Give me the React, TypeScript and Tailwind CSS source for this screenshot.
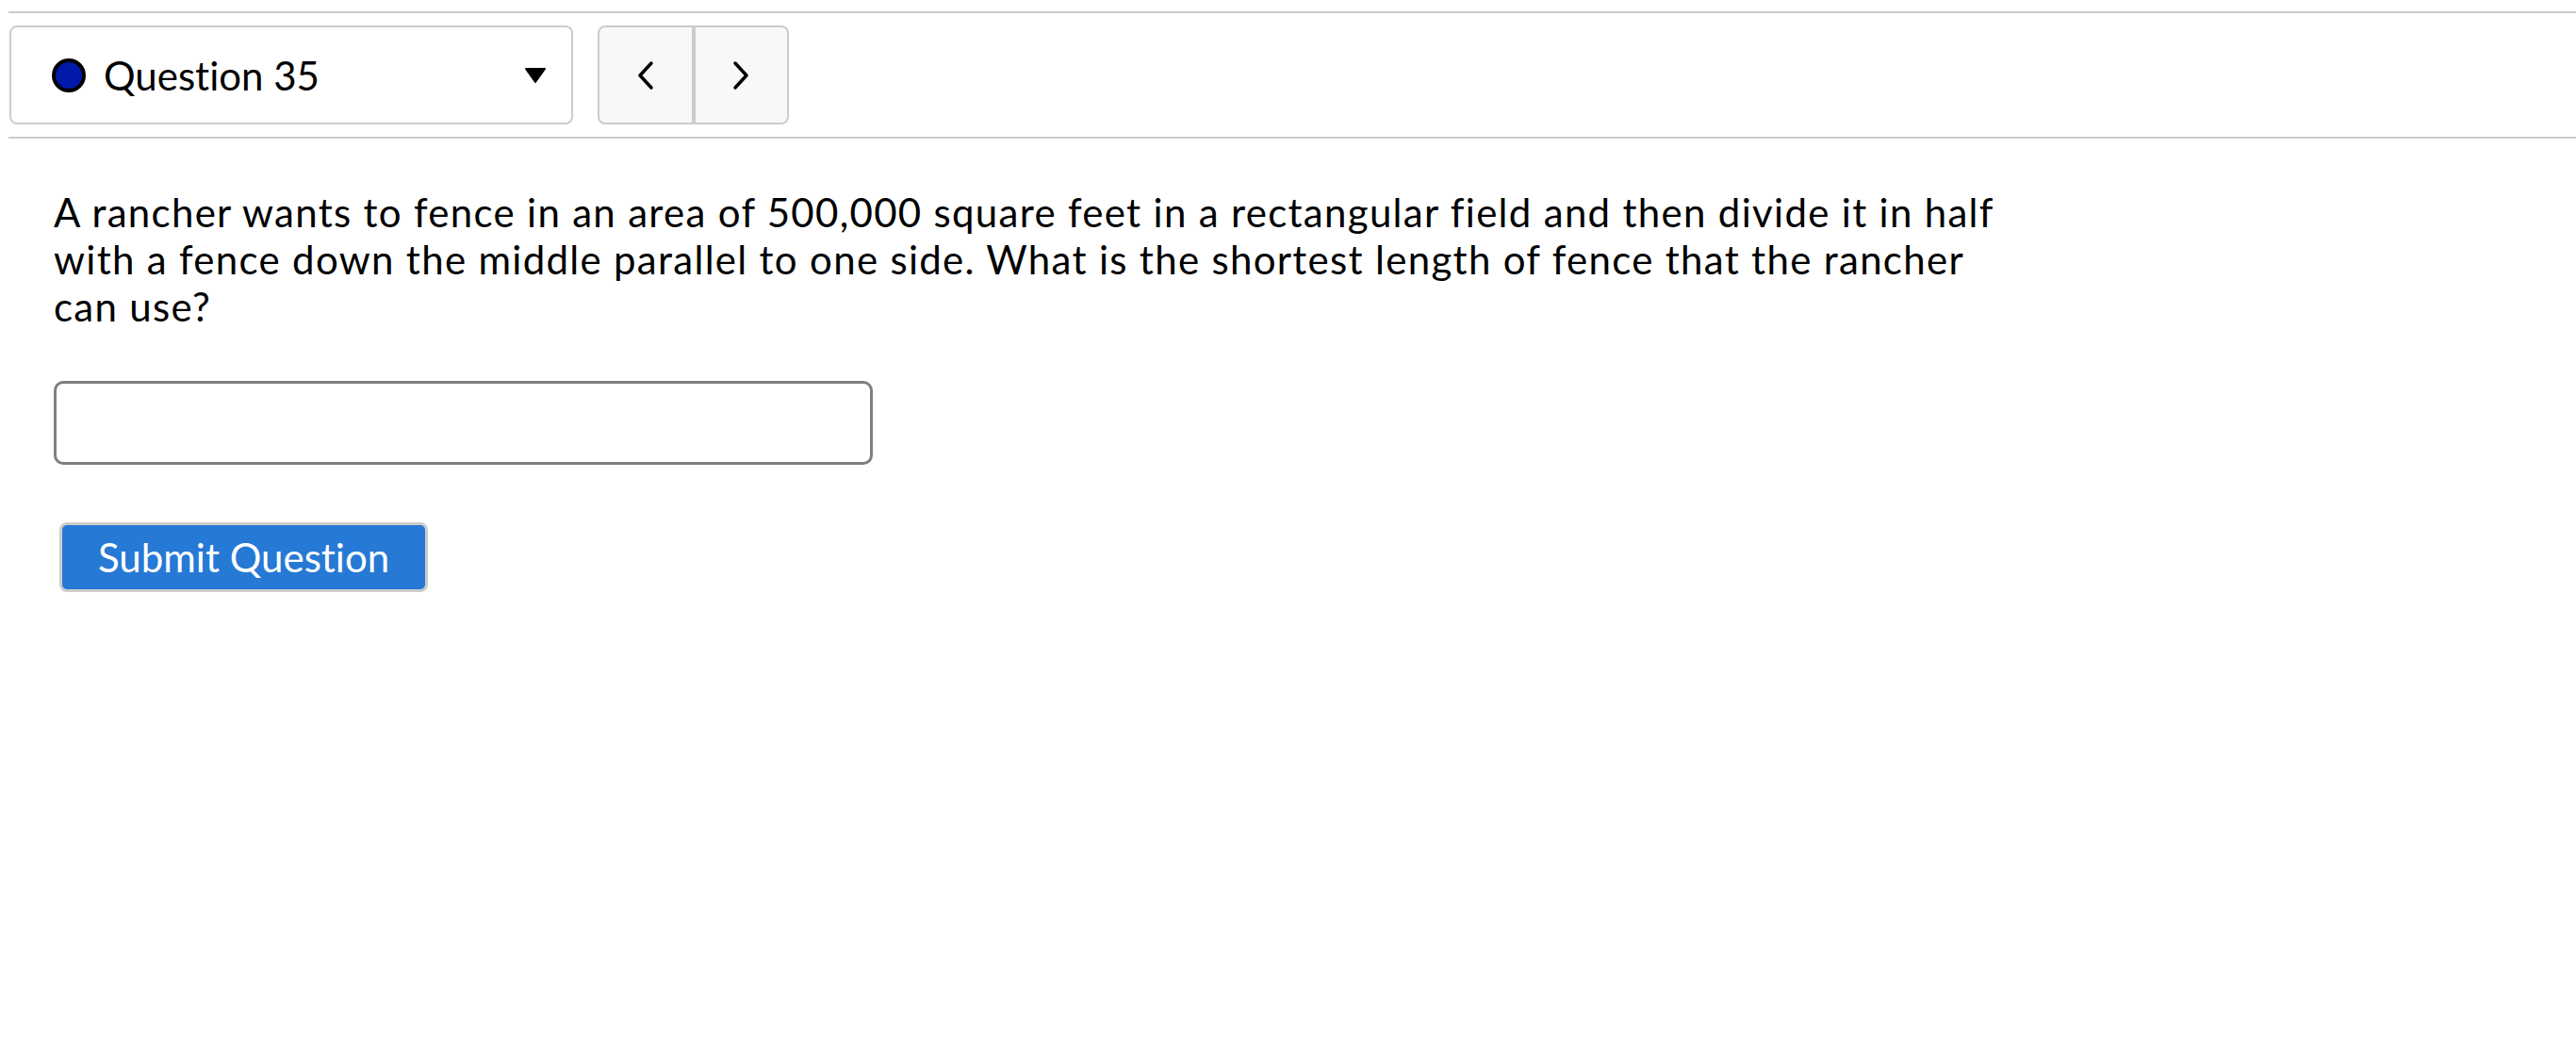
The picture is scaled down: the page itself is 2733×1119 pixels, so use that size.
export default function App() {
  return (
    <div className="min-h-screen w-full bg-white font-['Lato','Liberation_Sans',sans-serif] text-black [font-variant-ligatures:none]">
      <div className="pl-[9px] pt-[12px]">
        <div className="border-t-2 border-[#cccccc]" />
        <div className="flex items-stretch gap-[26px] py-[13px] pl-px">
          <div className="flex h-[105px] w-[598px] items-center rounded-[8px] border-2 border-[#cccccc] bg-white pl-[43px] pr-[27px]">
            <span className="h-[36px] w-[36px] rounded-full border-[4px] border-black bg-[#0019a8]" />
            <span className="ml-[19px] text-[42px] leading-none">Question 35</span>
            <svg className="ml-auto" width="22" height="16" viewBox="0 0 22 16">
              <path d="M1 1 L21 1 L11 15 Z" fill="black" stroke="black" strokeWidth="2" strokeLinejoin="round" />
            </svg>
          </div>
          <div className="flex h-[105px] w-[203px] overflow-hidden rounded-[8px] border-2 border-[#cccccc] bg-[#f8f8f8]">
            <button className="flex flex-1 items-center justify-center border-r-[4px] border-[#cccccc]">
              <svg width="20" height="32" viewBox="0 0 20 32">
                <path d="M16 3 L4 16 L16 29" fill="none" stroke="black" strokeWidth="3.5" strokeLinecap="round" strokeLinejoin="round" />
              </svg>
            </button>
            <button className="flex flex-1 items-center justify-center">
              <svg width="20" height="32" viewBox="0 0 20 32">
                <path d="M4 3 L16 16 L4 29" fill="none" stroke="black" strokeWidth="3.5" strokeLinecap="round" strokeLinejoin="round" />
              </svg>
            </button>
          </div>
        </div>
        <div className="border-t-2 border-[#cccccc]" />
      </div>

      <div className="pl-[57px] pt-[53px]">
        <p className="w-[2100px] text-[42px] leading-[50px] tracking-[1.3px]">
          A rancher wants to fence in an area of 500,000 square feet in a rectangular field and then divide it in half
          with a fence down the middle parallel to one side. What is the shortest length of fence that the rancher can use?
        </p>
        <input
          type="text"
          className="mt-[54px] block h-[89px] w-[869px] rounded-[10px] border-[3px] border-[#7f7f7f] bg-white px-4 text-[42px] outline-none"
        />
        <button className="ml-[6px] mt-[61px] block h-[74px] rounded-[8px] border-[3px] border-[#cccccc] bg-[#2679d4] px-[38px] text-[42px] leading-none text-white">
          Submit Question
        </button>
      </div>
    </div>
  );
}
